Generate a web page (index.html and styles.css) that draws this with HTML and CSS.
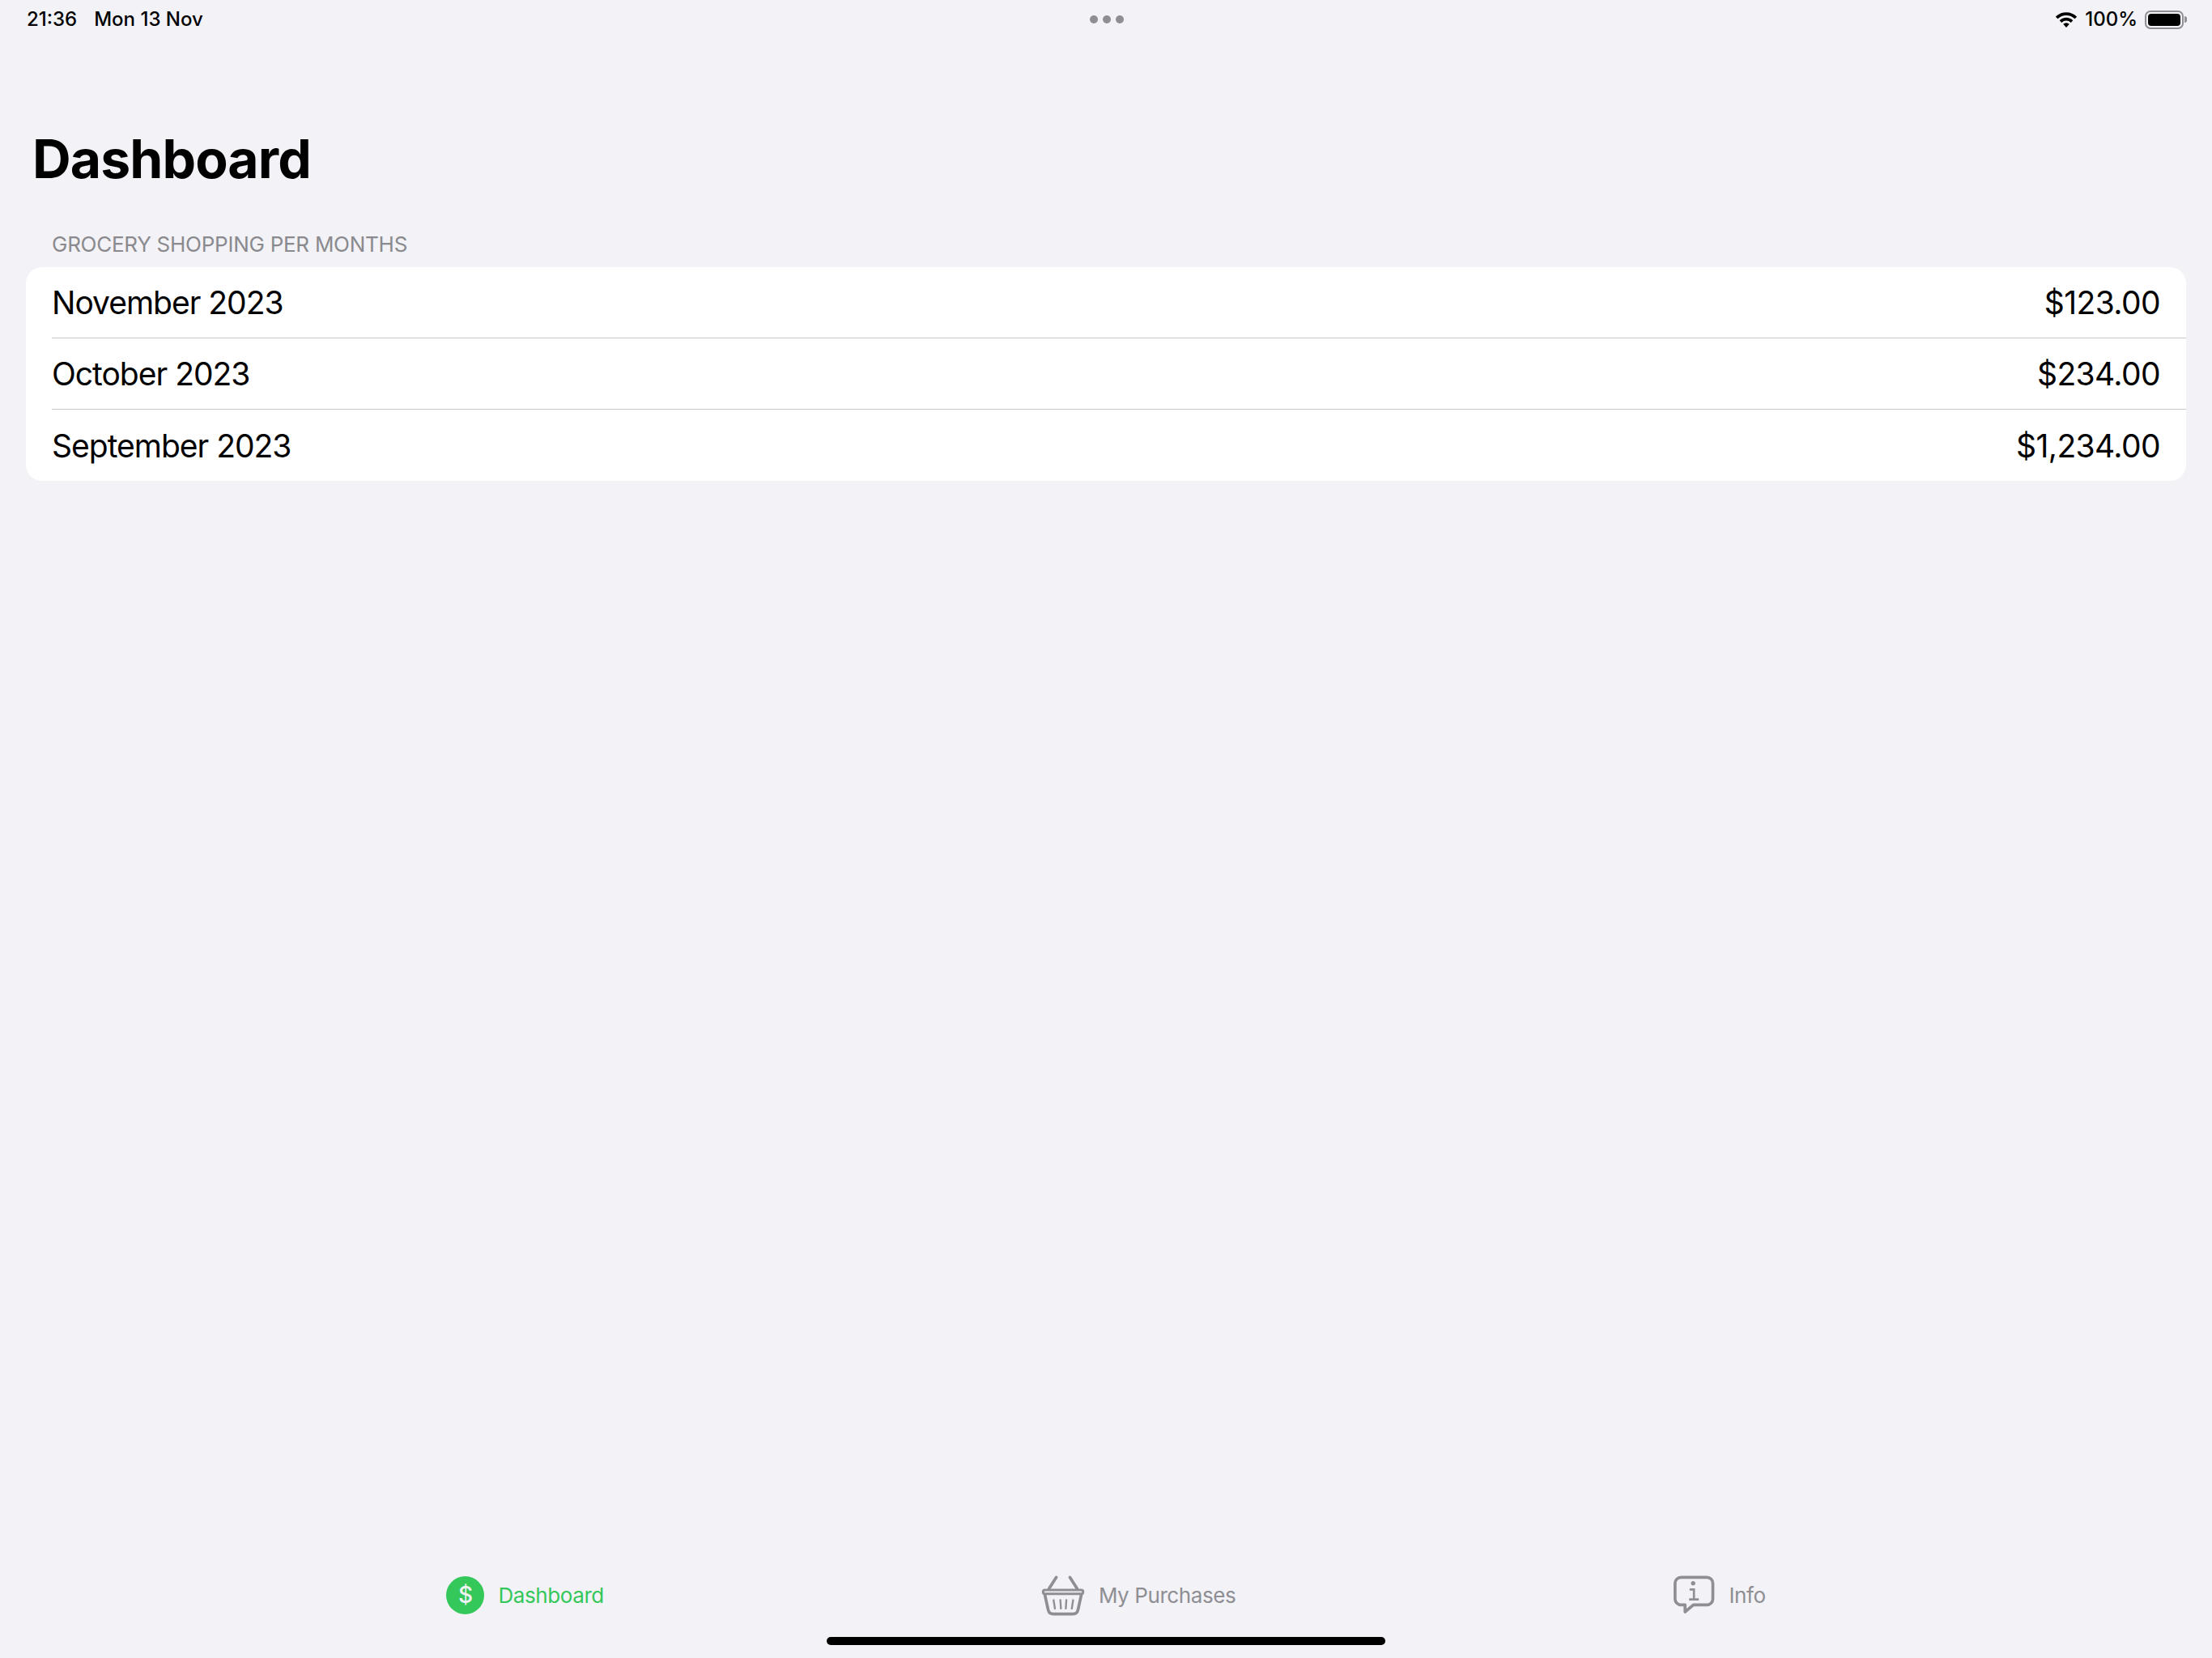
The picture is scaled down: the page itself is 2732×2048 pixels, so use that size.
FILE: index.html
```html
<!DOCTYPE html>
<html lang="en">
<head>
    <meta charset="UTF-8">
    <meta name="viewport" content="width=device-width, initial-scale=1.0">
    <title>Dashboard</title>
    <link rel="stylesheet" href="styles.css">
</head>
<body>
    <div class="page">
        <div class="status-bar">
            <div class="status-left">
                <span>21:36</span>
                <span>Mon 13 Nov</span>
            </div>
            <div class="status-dots">
                <span class="dot"></span>
                <span class="dot"></span>
                <span class="dot"></span>
            </div>
            <div class="status-right">
                <svg class="wifi" viewBox="0 0 28 20" width="28" height="20">
                    <path d="M2.2 8A16.5 16.5 0 0 1 25.8 8" fill="none" stroke="#000" stroke-width="3.8"/>
                    <path d="M7 12.6A9.8 9.8 0 0 1 21 12.6" fill="none" stroke="#000" stroke-width="3.8"/>
                    <path d="M10.2 15.8A5.2 5.2 0 0 1 17.8 15.8L14 20Z" fill="#000"/>
                </svg>
                <span class="battery-text">100%</span>
                <div class="battery">
                    <div class="battery-level"></div>
                </div>
                <div class="battery-nub"></div>
            </div>
        </div>

        <main class="content">
            <h1>Dashboard</h1>
            <h2 class="section-title">GROCERY SHOPPING PER MONTHS</h2>
            <div class="card">
                <div class="row">
                    <div class="row-inner">
                        <span class="row-label">November 2023</span>
                        <span class="row-value">$123.00</span>
                    </div>
                </div>
                <div class="row">
                    <div class="row-inner">
                        <span class="row-label">October 2023</span>
                        <span class="row-value">$234.00</span>
                    </div>
                </div>
                <div class="row">
                    <div class="row-inner">
                        <span class="row-label">September 2023</span>
                        <span class="row-value">$1,234.00</span>
                    </div>
                </div>
            </div>
        </main>

        <nav class="tab-bar">
            <div class="tab tab-active">
                <div class="dollar-icon"><span>$</span></div>
                <span>Dashboard</span>
            </div>
            <div class="tab">
                <svg class="basket-icon" viewBox="0 0 160 155" width="54" height="52">
                    <g fill="none" stroke="#8e8e93" stroke-linecap="round" stroke-linejoin="round">
                        <path d="M55 13L28 55M105 13L132 55" stroke-width="11"/>
                        <rect x="6.5" y="59.5" width="147" height="14" rx="6" stroke-width="9"/>
                        <path d="M13 78L25 132Q28 148 44 148H116Q132 148 135 132L147 78" stroke-width="11"/>
                        <path d="M45 97L50 128M70 97L72 128M92 97L90 128M117 97L112 128" stroke-width="7"/>
                    </g>
                </svg>
                <span>My Purchases</span>
            </div>
            <div class="tab">
                <svg class="info-icon" viewBox="0 0 155 150" width="52" height="50">
                    <path d="M30 10H126a22 22 0 0 1 22 22V90a22 22 0 0 1-22 22H76L45 138V112H30a22 22 0 0 1-22-22V32a22 22 0 0 1 22-22Z" fill="none" stroke="#8e8e93" stroke-width="11" stroke-linejoin="round"/>
                    <circle cx="75" cy="32" r="8" fill="#8e8e93"/>
                    <path d="M62 55H78V92M60 92H96" fill="none" stroke="#8e8e93" stroke-width="8"/>
                </svg>
                <span>Info</span>
            </div>
        </nav>
        <div class="home-indicator"></div>
    </div>
</body>
</html>
```

FILE: styles.css
```css
body {
    margin: 0;
    background-color: #f2f2f7;
    font-family: Inter, "Noto Sans", sans-serif;
    color: #000;
}
.page {
    height: 2048px;
    display: flex;
    flex-direction: column;
    overflow: hidden;
}
.status-bar {
    height: 48px;
    padding: 0 31px 0 33px;
    display: flex;
    align-items: center;
    font-size: 24px;
    font-weight: 500;
    line-height: 48px;
}
.status-left {
    flex: 1;
    display: flex;
    gap: 21px;
}
.status-dots {
    display: flex;
    gap: 6px;
}
.dot {
    width: 10px;
    height: 10px;
    border-radius: 50%;
    background-color: #8e8e93;
}
.status-right {
    flex: 1;
    display: flex;
    justify-content: flex-end;
    align-items: center;
}
.battery-text {
    margin-left: 9px;
    margin-right: 9px;
}
.battery {
    width: 48px;
    height: 23px;
    box-sizing: border-box;
    border: 2px solid #8e8e93;
    border-radius: 7px;
    padding: 2px;
}
.battery-level {
    height: 100%;
    background-color: #000;
    border-radius: 4px;
}
.battery-nub {
    width: 3px;
    height: 8px;
    margin-left: 1px;
    background-color: #8e8e93;
    border-radius: 0 3px 3px 0;
}
.content {
    flex: 1;
    padding: 108px 32px 0;
}
h1 {
    margin: 0 0 50px 8px;
    font-size: 66px;
    line-height: 80px;
    font-weight: 700;
    letter-spacing: -0.9px;
}
.section-title {
    margin: 0 0 12px 32px;
    font-size: 26px;
    line-height: 32px;
    font-weight: 400;
    letter-spacing: -0.26px;
    color: #8a8a8e;
}
.card {
    background-color: #fff;
    border-radius: 20px;
    overflow: hidden;
}
.row {
    padding-left: 32px;
    font-size: 39px;
}
.row-inner {
    height: 88px;
    box-sizing: border-box;
    padding-right: 32px;
    display: flex;
    justify-content: space-between;
    align-items: center;
    border-bottom: 1px solid #c6c6c8;
}
.row:last-child .row-inner {
    border-bottom: none;
}
.row-label {
    letter-spacing: -1px;
}
.row-value {
    letter-spacing: -0.6px;
}
.tab-bar {
    height: 68px;
    display: flex;
    justify-content: center;
    align-items: center;
    gap: 540px;
}
.tab {
    display: flex;
    align-items: center;
    gap: 17px;
    font-size: 26px;
    letter-spacing: -0.4px;
    color: #8e8e93;
}
.tab-active {
    color: #34c759;
}
.dollar-icon {
    width: 47px;
    height: 47px;
    border-radius: 50%;
    background-color: #34c759;
    color: #f2f2f7;
    font-size: 28px;
    font-weight: 500;
    display: flex;
    justify-content: center;
    align-items: center;
}
.home-indicator {
    width: 690px;
    height: 10px;
    margin: 18px auto 16px;
    background-color: #000;
    border-radius: 5px;
}
```
